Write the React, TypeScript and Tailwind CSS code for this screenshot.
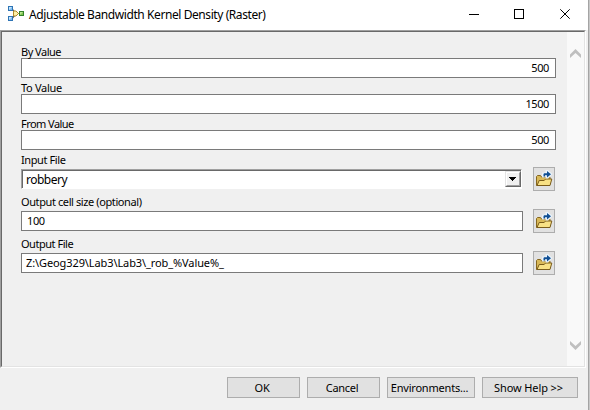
import React from "react";

const ui = "font-['Noto_Sans','Open_Sans',sans-serif] text-black whitespace-pre";

function Label({ text, spacing }: { text: string; spacing: string }) {
  return <div className={`${ui} h-4 text-[11px] leading-[20px] ${spacing}`}>{text}</div>;
}

function FolderIcon() {
  return (
    <svg width="18" height="18" viewBox="0 0 18 18" className="shrink-0">
      <path d="M1.500 15.500V6.500l1-1h3l1 1.500h8l.5.500V14l-1 1.500z" fill="#d9b958" stroke="#86671f" />
      <path d="M2 15.500 4.200 10.500h5l1.300-1.500h6.300L15 15.500z" fill="#f8e185" stroke="#7a5c1a" />
      <path d="M7 7.500V2.500h3.500V0H13l4.500 4-4.500 4.500h-2.500V6.500H9.500v1z" fill="#e9f3fb" />
      <path d="M8.500 6.500V4l.7-.8H12V1l4 3.200L12 7.500V5.300h-2v1.200z" fill="#0f4f94" />
    </svg>
  );
}

function NumberRow({ label, value, spacing }: { label: string; value: string; spacing: string }) {
  return (
    <div className="h-9">
      <Label text={label} spacing={spacing} />
      <div className={`${ui} h-5 w-[535px] border border-[#7a7a7a] bg-white pr-[6px] text-right text-[11px] leading-[18px] tracking-[-0.4px]`}>
        {value}
      </div>
    </div>
  );
}

function FileRow({ label, spacing, children }: { label: string; spacing: string; children: React.ReactNode }) {
  return (
    <div className="flex h-[42px] items-end pb-px">
      <div className="h-[41px] w-[502px]">
        <Label text={label} spacing={spacing} />
        <div className="pt-[3px]">{children}</div>
      </div>
      <button className="ml-[10px] flex h-6 w-[22px] items-center justify-center border border-[#adadad] bg-[#e1e1e1]">
        <FolderIcon />
      </button>
    </div>
  );
}

function DialogButton({ text, size }: { text: string; size: string }) {
  return (
    <button className={`${ui} h-[21px] border border-[#adadad] bg-[#e1e1e1] text-center text-[11px] leading-[20px] ${size}`}>
      {text}
    </button>
  );
}

export default function App() {
  return (
    <div className="flex h-[410px] w-[590px] overflow-hidden bg-[#f0f0f0]">
      <div className="flex w-[588px] flex-col">
        <header className="flex h-[30px] bg-white">
          <svg className="ml-[7px] mt-[5px]" width="18" height="18" viewBox="0 0 18 18">
            <path d="M5.500 4.500 8 7.500M5.500 13 8 10M11 8.500h2" stroke="#555" strokeWidth="1.200" fill="none" />
            <rect x="1.500" y="1.500" width="4" height="4" fill="#7cbcf0" stroke="#2e74b5" />
            <rect x="1.500" y="11.500" width="4" height="4" fill="#7cbcf0" stroke="#2e74b5" />
            <path d="M2 2h3L2 5zM2 12h3l-3 3z" fill="#c8e6fb" />
            <path d="M6.500 6H9l2.500 2.500L9 11H6.500z" fill="#fdf0a4" stroke="#b08a2c" />
            <rect x="12.500" y="6.500" width="4" height="4" fill="#7fc64f" stroke="#34812a" />
            <path d="M13 7h3l-3 3z" fill="#b8e690" />
          </svg>
          <h1 className={`${ui} ml-1 w-[431px] text-[12px] leading-[30px] tracking-[-0.42px]`}>Adjustable Bandwidth Kernel Density (Raster)</h1>
          <svg width="128" height="30" viewBox="460 0 128 30" fill="none" stroke="#000" shapeRendering="crispEdges">
            <path d="M469 14.500h10" />
            <rect x="514.500" y="9.500" width="9" height="9" />
            <path d="M560.300 9.300l9.400 9.400M569.700 9.300l-9.400 9.400" shapeRendering="auto" />
          </svg>
        </header>
        <div className="h-[338px] w-[586px] border-b border-l border-r border-t border-b-white border-l-[#a0a0a0] border-r-white border-t-[#a0a0a0]">
          <div className="flex h-full border border-b-[#e3e3e3] border-l-[#696969] border-r-[#e3e3e3] border-t-[#696969]">
            <main className="w-[565px] pl-[19px] pt-[10px]">
              <NumberRow label="By Value" value="500" spacing="tracking-[-0.5px]" />
              <NumberRow label="To Value" value="1500" spacing="tracking-[-0.3px]" />
              <NumberRow label="From Value" value="500" spacing="tracking-[-0.55px]" />
              <FileRow label="Input File" spacing="tracking-[-0.4px]">
                <div className="h-5 w-[501px] border border-b-white border-l-[#a0a0a0] border-r-white border-t-[#a0a0a0]">
                  <div className="flex h-full border-l border-t border-l-[#696969] border-t-[#696969] bg-white">
                    <span className={`${ui} flex-1 pl-[3px] text-[12px] leading-[18px] tracking-[-0.5px]`}>robbery</span>
                    <div className="h-4 w-4 border border-b-[#696969] border-l-[#e3e3e3] border-r-[#696969] border-t-[#e3e3e3]">
                      <div className="flex h-full items-center justify-center border border-b-[#a0a0a0] border-l-white border-r-[#a0a0a0] border-t-white bg-[#f0f0f0]">
                        <svg width="7" height="4" viewBox="0 0 7 4" className="mr-px shrink-0"><path d="M0 0h7v1H6v1H5v1H4v1H3V3H2V2H1V1H0z" /></svg>
                      </div>
                    </div>
                  </div>
                </div>
              </FileRow>
              <FileRow label="Output cell size (optional)" spacing="tracking-[-0.4px]">
                <div className={`${ui} h-5 border border-[#7a7a7a] bg-white pl-[5px] text-[11px] leading-[18px] tracking-[-0.4px]`}>100</div>
              </FileRow>
              <FileRow label="Output File" spacing="tracking-[-0.47px]">
                <div className={`${ui} h-5 border border-[#7a7a7a] bg-white pl-[4px] text-[11px] leading-[18px] tracking-[-0.1px]`}>{"Z:\\Geog329\\Lab3\\Lab3\\_rob_%Value%_"}</div>
              </FileRow>
            </main>
            <aside className="flex w-[17px] flex-col items-center justify-between bg-[#f9f9f9] pb-[16px] pt-[17px]">
              <svg width="11" height="9" viewBox="0 0 11 9"><path d="M0 5.500 5.500 0 11 5.500V9L5.500 4 0 9z" fill="#bfbfbf" /></svg>
              <svg width="11" height="9" viewBox="0 0 11 9"><path d="M0 3.500 5.500 9 11 3.500V0L5.500 5 0 0z" fill="#bfbfbf" /></svg>
            </aside>
          </div>
        </div>
        <footer className="flex gap-[7px] pl-[227px] pt-[9px]">
          <DialogButton text="OK" size="w-[73px] pr-[3px] tracking-[-0.3px]" />
          <DialogButton text="Cancel" size="w-[73px] pr-[3px] tracking-[-0.3px]" />
          <DialogButton text="Environments..." size="w-[88px] pr-[3px] tracking-[-0.2px]" />
          <DialogButton text="Show Help >>" size="w-[96px] pr-[3px] tracking-[-0.1px]" />
        </footer>
      </div>
      <div className="w-[2px] border-l border-[#a4a4a4] bg-[#c8c8c8]" />
    </div>
  );
}
